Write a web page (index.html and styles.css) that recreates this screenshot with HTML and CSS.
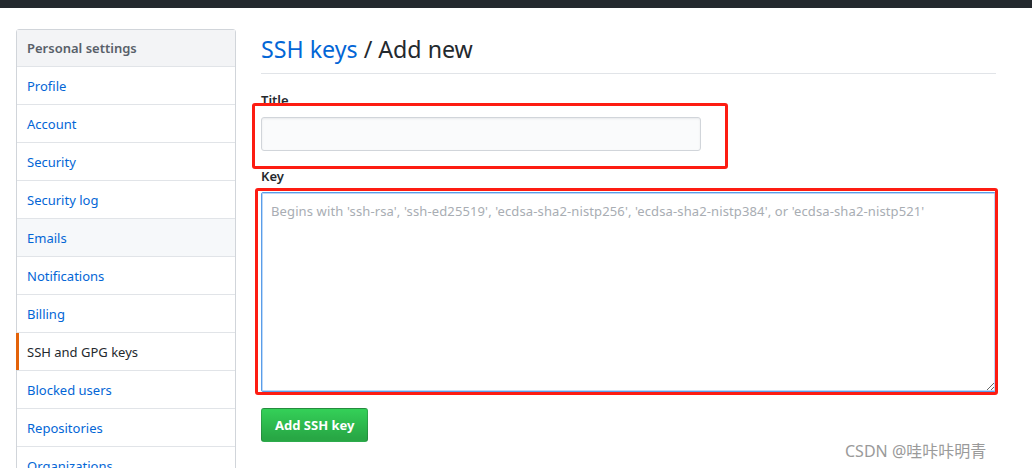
FILE: index.html
```html
<!DOCTYPE html>
<html>
<head>
<meta charset="utf-8">
<link rel="stylesheet" href="styles.css">
</head>
<body>
<div class="topbar"></div>
<div class="page">
  <nav class="menu">
    <div class="menu-heading">Personal settings</div>
    <a class="menu-item">Profile</a>
    <a class="menu-item">Account</a>
    <a class="menu-item">Security</a>
    <a class="menu-item">Security log</a>
    <a class="menu-item hover">Emails</a>
    <a class="menu-item">Notifications</a>
    <a class="menu-item">Billing</a>
    <a class="menu-item selected">SSH and GPG keys</a>
    <a class="menu-item">Blocked users</a>
    <a class="menu-item">Repositories</a>
    <a class="menu-item">Organizations</a>
  </nav>
  <main class="main">
    <h2 class="subhead"><a class="crumb">SSH keys</a> / Add new</h2>
    <form class="form">
      <label class="label label-title">Title</label>
      <input class="input" type="text">
      <label class="label label-key">Key</label>
      <textarea class="textarea" placeholder="Begins with 'ssh-rsa', 'ssh-ed25519', 'ecdsa-sha2-nistp256', 'ecdsa-sha2-nistp384', or 'ecdsa-sha2-nistp521'"></textarea>
      <button class="btn" type="button">Add SSH key</button>
    </form>
  </main>
</div>
<div class="mark mark-title"></div>
<div class="mark mark-key"></div>
<div class="watermark">CSDN @哇咔咔明青</div>
</body>
</html>
```

FILE: styles.css
```css
html, body {
  margin: 0;
  padding: 0;
  background: #fff;
  overflow: hidden;
}
body {
  position: relative;
  width: 1032px;
  height: 468px;
  font-family: "Noto Sans", "Open Sans", sans-serif;
  font-size: 14px;
  color: #24292e;
}
.topbar {
  height: 8px;
  background: #24292e;
}
.page {
  display: flex;
  align-items: flex-start;
  padding: 21px 0 0 16px;
  gap: 25px;
}
.menu {
  width: 218px;
  border: 1px solid #d1d5da;
  border-radius: 3px;
  display: flex;
  flex-direction: column;
}
.menu-heading {
  padding: 8px 10px;
  line-height: 20px;
  font-weight: 600;
  color: #586069;
  background: #f3f4f6;
  border-bottom: 1px solid #e1e4e8;
  font-size: 13px;
}
.menu-item {
  position: relative;
  padding: 9px 10px 7px;
  line-height: 21px;
  color: #0366d6;
  border-bottom: 1px solid #e1e4e8;
  font-size: 13px;
}
.menu-item.hover {
  background: #f6f8fa;
}
.menu-item.selected {
  color: #24292e;
}
.menu-item.selected::before {
  content: "";
  position: absolute;
  left: -1px;
  top: 0;
  bottom: 0;
  width: 3px;
  background: #e36209;
}
.main {
  width: 735px;
  padding-top: 2px;
}
.subhead {
  margin: 0;
  font-size: 23.2px;
  font-weight: 400;
  line-height: 36px;
  padding-bottom: 6px;
  border-bottom: 1px solid #e1e4e8;
}
.crumb {
  color: #0366d6;
}
.form {
  display: flex;
  flex-direction: column;
  align-items: flex-start;
  padding-top: 16px;
}
.label {
  font-weight: 600;
  line-height: 21px;
  font-size: 13px;
}
.input {
  margin-top: 6px;
  width: 440px;
  height: 34px;
  box-sizing: border-box;
  background: #fafbfc;
  border: 1px solid #d1d5da;
  border-radius: 3px;
  box-shadow: inset 0 1px 2px rgba(27, 31, 35, 0.075);
}
.label-key {
  margin-top: 15px;
}
.textarea {
  margin-top: 5px;
  width: 735px;
  height: 200px;
  box-sizing: border-box;
  border: 1px solid #5a9de8;
  box-shadow: inset 0 0 0 1px rgba(160, 200, 245, 0.7);
  border-radius: 2px;
  padding: 8px 9px;
  font-family: "Noto Sans", "Open Sans", sans-serif;
  font-size: 13px;
  letter-spacing: 0.12px;
  line-height: 20px;
  outline: none;
}
.textarea::placeholder {
  color: #a8adb3;
}
.btn {
  margin-top: 16px;
  height: 34px;
  padding: 0 13px;
  font-family: "Noto Sans", "Open Sans", sans-serif;
  font-size: 13px;
  font-weight: 700;
  color: #fff;
  background: linear-gradient(#34d058, #28a745 90%);
  border: 1px solid rgba(27, 31, 35, 0.2);
  border-radius: 3px;
}
.mark {
  position: absolute;
  border: 3px solid #fd1c12;
  border-radius: 3px;
  box-sizing: border-box;
}
.mark-title {
  left: 252px;
  top: 103px;
  width: 476px;
  height: 66px;
}
.mark-key {
  left: 255px;
  top: 188px;
  width: 743px;
  height: 207px;
}
.watermark {
  position: absolute;
  left: 845px;
  top: 439px;
  font-family: "Noto Sans", "Noto Sans CJK SC", sans-serif;
  font-size: 16px;
  line-height: 24px;
  color: #9a9a9a;
  text-shadow: 0 0 1px #fff;
}
```
